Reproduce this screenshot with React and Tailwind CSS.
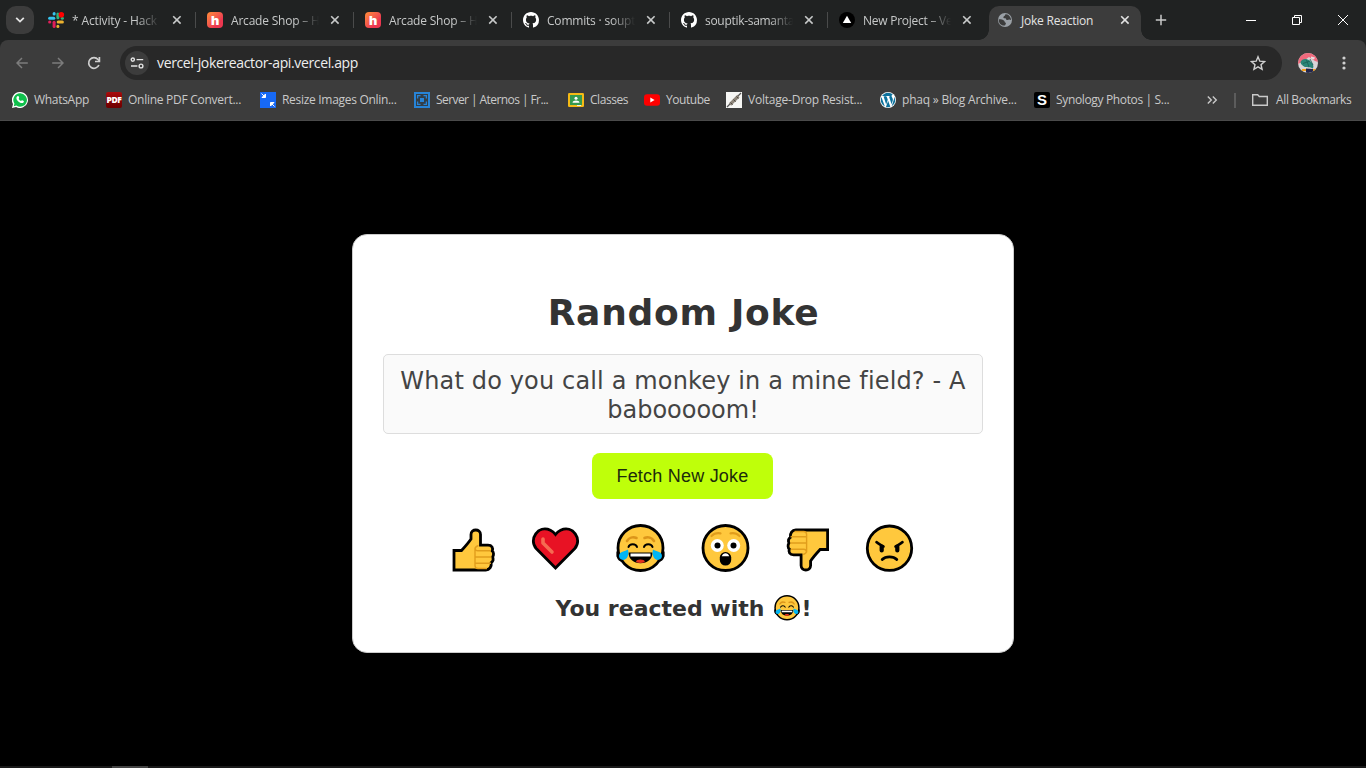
import React from "react";

const SlackIcon = () => (
  <svg viewBox="0 0 16 16" className="h-4 w-4 shrink-0 overflow-visible">
    <g strokeWidth="3" strokeLinecap="round" fill="none">
      <path d="M1.6 6.2h4.2" stroke="#36c5f0" />
      <path d="M6.1 1.6v.3" stroke="#36c5f0" />
      <path d="M9.9 2v3.8" stroke="#2eb67d" />
      <path d="M14.3 6.2h.1" stroke="#2eb67d" />
      <path d="M10.2 9.9h4.2" stroke="#ecb22e" />
      <path d="M9.9 14.2v.2" stroke="#ecb22e" />
      <path d="M6.1 10.2v4.2" stroke="#e01e5a" />
      <path d="M1.6 9.9h.2" stroke="#e01e5a" />
    </g>
    <circle cx="13.3" cy="2.7" r="2.8" fill="#f00" />
  </svg>
);

const ArcadeIcon = () => (
  <span className="flex h-4 w-4 shrink-0 items-center justify-center rounded-[4px] bg-linear-to-br from-[#ff8c37] to-[#ec3750] to-70% font-['Open_Sans',sans-serif] text-[13px] leading-none font-extrabold text-white">
    h
  </span>
);

const GithubIcon = () => (
  <svg viewBox="0 0 16 16" className="h-4 w-4 shrink-0" fill="#fff">
    <path d="M8 0C3.58 0 0 3.58 0 8c0 3.54 2.29 6.53 5.47 7.59.4.07.55-.17.55-.38 0-.19-.01-.82-.01-1.49-2.01.37-2.53-.49-2.69-.94-.09-.23-.48-.94-.82-1.13-.28-.15-.68-.52-.01-.53.63-.01 1.08.58 1.23.82.72 1.21 1.87.87 2.33.66.07-.52.28-.87.51-1.07-1.78-.2-3.64-.89-3.64-3.95 0-.87.31-1.59.82-2.15-.08-.2-.36-1.02.08-2.12 0 0 .67-.21 2.2.82.64-.18 1.32-.27 2-.27s1.36.09 2 .27c1.53-1.04 2.2-.82 2.2-.82.44 1.1.16 1.92.08 2.12.51.56.82 1.27.82 2.15 0 3.07-1.87 3.75-3.65 3.95.29.25.54.73.54 1.48 0 1.07-.01 1.93-.01 2.2 0 .21.15.46.55.38A8.01 8.01 0 0 0 16 8c0-4.42-3.58-8-8-8z" />
  </svg>
);

const VercelIcon = () => (
  <svg viewBox="0 0 16 16" className="h-4 w-4 shrink-0">
    <circle cx="8" cy="8" r="8" fill="#000" />
    <path d="M8 3.7 12.2 11H3.8z" fill="#fff" />
  </svg>
);

const GlobeIcon = () => (
  <svg viewBox="0 0 16 16" className="h-4 w-4 shrink-0">
    <circle cx="8" cy="8" r="7" fill="#9aa0a6" />
    <path d="M1.8 7.3c2.6.1 4 .4 5.3 1.4 1 .8.2 1.6 1.2 1.9 1.2.4.4 1.7-.3 2.9-3.6.6-6.4-1.8-6.2-6.2zM8.4 2.2c2.6-.2 4.8 1.9 5.4 4.2.5 2.2-.6 1.6-1.4 1.2-.8-.4-1.3.9-2.6.3-1.3-.5-.3-1.6-1.6-1.6-1.7 0-2.4-1-1.5-1.9.8-.8 1.3-.6 1.7-2.2z" fill="#3c3c3c" />
  </svg>
);

const TABS = [
  { icon: <SlackIcon />, pad: "pl-[10px]", gap: "gap-2", text: "* Activity - Hack", track: "tracking-[-0.14px]" },
  { icon: <ArcadeIcon />, pad: "pl-[11px]", gap: "gap-2", text: "Arcade Shop – H", track: "tracking-[-0.2px]" },
  { icon: <ArcadeIcon />, pad: "pl-[11px]", gap: "gap-2", text: "Arcade Shop – H", track: "tracking-[-0.2px]" },
  { icon: <GithubIcon />, pad: "pl-[11px]", gap: "gap-2", text: "Commits · soupt", track: "tracking-[-0.2px]" },
  { icon: <GithubIcon />, pad: "pl-[11px]", gap: "gap-2", text: "souptik-samanta", track: "tracking-[-0.3px]" },
  { icon: <VercelIcon />, pad: "pl-[11px]", gap: "gap-2", text: "New Project – Ve", track: "tracking-[-0.25px]" },
];

const CloseX = () => (
  <svg viewBox="0 0 10 10" className="h-[10px] w-[10px] shrink-0" stroke="currentColor" strokeWidth="1.6">
    <path d="M1.2 1.2l7.4 7.4M8.6 1.2L1.2 8.6" />
  </svg>
);

function TabStrip() {
  return (
    <div className="flex h-10 bg-[#202222] text-[12px] text-[#c7c9c9]">
      <div className="flex w-[38px] shrink-0 items-center pl-[6px]">
        <div className="flex h-7 w-7 items-center justify-center rounded-[10px] bg-[#3c3c3c]">
          <svg viewBox="0 0 10 8" className="h-2 w-[10px]" fill="none" stroke="#e3e3e3" strokeWidth="1.8">
            <path d="M1.2 1.8 5 5.6l3.8-3.8" />
          </svg>
        </div>
      </div>
      {TABS.map((t, i) => (
        <div key={i} className="flex w-[158px] shrink-0 items-center justify-between">
          <div className={`flex items-center ${t.pad} ${t.gap}`}>
            {t.icon}
            <span className={`w-[90px] pt-px whitespace-nowrap leading-4 mask-r-from-72% mask-r-to-98% ${t.track}`}>{t.text}</span>
          </div>
          <div className="flex items-center gap-[13px]">
            <CloseX />
            <span className={i === 5 ? "h-4 w-[1px]" : "h-4 w-[1px] bg-[#4a4b4b]"} />
          </div>
        </div>
      ))}
      <div className="flex w-[165px] shrink-0 items-end">
        <span className="-ml-[7px] h-[10px] w-[10px] shrink-0 bg-[radial-gradient(circle_at_0_0,transparent_9.5px,#3c3c3c_10px)]" />
        <div className="flex h-[34px] w-[152px] shrink-0 items-center rounded-t-[10px] bg-[#3c3c3c] pb-[6px] pl-2 text-[#e3e3e3]">
          <GlobeIcon />
          <span className="ml-2 w-[99px] pt-px whitespace-nowrap leading-4 tracking-[-0.22px]">Joke Reaction</span>
          <CloseX />
        </div>
        <span className="h-[10px] w-[10px] shrink-0 bg-[radial-gradient(circle_at_100%_0,transparent_9.5px,#3c3c3c_10px)]" />
      </div>
      <div className="flex flex-1 items-center">
        <svg viewBox="0 0 12 12" className="ml-[4px] h-3 w-3 shrink-0" stroke="#c7c9c9" strokeWidth="1.5">
          <path d="M6 .8v10.4M.8 6h10.4" />
        </svg>
        <svg viewBox="0 0 10 10" className="ml-[79px] h-[10px] w-[10px] shrink-0" stroke="#fff">
          <path d="M0 5.5h10" />
        </svg>
        <svg viewBox="0 0 10 10" className="ml-[36px] h-[10px] w-[10px] shrink-0 overflow-visible" stroke="#fff" fill="none">
          <path d="M.5 2.5h7v7h-7zM2.5 2.5v-2h7v7h-2" />
        </svg>
        <svg viewBox="0 0 10 10" className="ml-[36px] h-[10px] w-[10px] shrink-0" stroke="#fff">
          <path d="M0 0l10 10M10 0L0 10" />
        </svg>
      </div>
    </div>
  );
}

function Toolbar() {
  return (
    <div className="bg-[#202222]">
      <div className="flex h-10 items-end rounded-t-[8px] bg-[#3c3c3c]">
        <div className="flex h-[34px] w-[120px] shrink-0 items-center pl-4">
          <svg viewBox="0 0 12 12" className="h-3 w-3" fill="none" stroke="#7c7c7c" strokeWidth="1.5">
            <path d="M11.8 6H1.2M6 1 1 6l5 5" />
          </svg>
          <svg viewBox="0 0 12 12" className="ml-6 h-3 w-3" fill="none" stroke="#7c7c7c" strokeWidth="1.5">
            <path d="M.2 6h10.6M6 1l5 5-5 5" />
          </svg>
          <svg viewBox="0 0 14 14" className="ml-[23px] h-[14px] w-[14px]" fill="none" stroke="#d0d0d0" strokeWidth="1.7">
            <path d="M11.9 9A5.3 5.3 0 1 1 11 3.5L12.6 5" />
            <path d="M12.4 1v4.5H8" />
          </svg>
        </div>
        <div className="flex h-[34px] w-[1162px] shrink-0 items-center rounded-full bg-[#282828] pl-[5px]">
          <div className="flex h-6 w-6 items-center justify-center rounded-full bg-[#3c3c3c]">
            <svg viewBox="0 0 12 12" className="h-3 w-3 overflow-visible" fill="none" stroke="#e3e3e3" strokeWidth="1.4">
              <circle cx="1.8" cy="2.6" r="1.6" />
              <path d="M5.6 2.6h6.6M0 9h6.4" />
              <circle cx="10" cy="9" r="1.9" />
            </svg>
          </div>
          <span className="ml-2 text-[14px] leading-5 tracking-[-0.36px] whitespace-nowrap text-[#eee]">vercel-jokereactor-api.vercel.app</span>
          <svg viewBox="0 0 16 16" className="mr-4 ml-auto h-4 w-4" fill="none" stroke="#d0d0d0" strokeWidth="1.4">
            <path d="M8 1.8l1.8 4.4 4.8.4-3.6 3.1 1.1 4.6L8 11.9l-4.1 2.4L5 9.7 1.4 6.6l4.8-.4z" />
          </svg>
        </div>
        <div className="flex h-[34px] items-center pl-[16px]">
          <svg viewBox="0 0 20 20" className="h-5 w-5">
            <defs>
              <clipPath id="avatar"><circle cx="10" cy="10" r="10" /></clipPath>
            </defs>
            <g clipPath="url(#avatar)">
              <path d="M0 0h20v20H0z" fill="#d9d5d7" />
              <path d="M0 0h20v9l-3-1-6-4-7 5-4 2z" fill="#f0697c" />
              <path d="M13 3.5l4 1-1 2-3-1z" fill="#e9dde0" />
              <path d="M2.5 9c1.5-3.5 6-4 9.5-1 3 2 4 5 3 7.5-3-2-7-.5-9-2S2.5 11 2.5 9z" fill="#2b8577" />
              <path d="M5 10.5l7-2.5M8.5 7l2.5 7M12 6l3 6" stroke="#1b5f57" fill="none" strokeWidth=".8" />
              <path d="M8 15.5l7 .5 1 4-8 1z" fill="#24264a" />
              <path d="M4 16h4v2H4zM15 16h3v2h-3z" fill="#f5a11a" />
            </g>
          </svg>
          <svg viewBox="0 0 4 14" className="ml-6 h-[14px] w-1" fill="#d0d0d0">
            <circle cx="2" cy="2" r="1.6" />
            <circle cx="2" cy="7" r="1.6" />
            <circle cx="2" cy="12" r="1.6" />
          </svg>
        </div>
      </div>
    </div>
  );
}

const ic = "h-4 w-4 shrink-0";
const BOOKMARKS = [
  {
    w: "w-[94px]", text: "WhatsApp", track: "tracking-[-0.3px]",
    icon: (
      <svg viewBox="0 0 16 16" className={ic}>
        <path d="M8 0a8 8 0 0 0-7 12L0 16l4.1-1A8 8 0 1 0 8 0z" fill="#fff" />
        <path d="M8 1.3a6.7 6.7 0 0 0-5.6 10.3l-.6 2.6 2.6-.7A6.7 6.7 0 1 0 8 1.3z" fill="#10bf4c" />
        <path d="M5.4 4.2c.4-.4 1-.3 1.2.1l.6 1.4c.1.4-.7.9-.5 1.2.5.9 1.3 1.6 2.3 2 .4.1.8-.9 1.2-.7l1.5.7c.5.3 0 1.6-.8 2-2.7 1-6.6-2.4-6.5-4.9 0-.8.6-1.4 1-1.8z" fill="#fff" />
      </svg>
    ),
  },
  {
    w: "w-[154px]", text: "Online PDF Convert...", track: "tracking-[-0.27px]",
    icon: (
      <span className="flex h-4 w-4 shrink-0 items-center justify-center rounded-[2px] bg-linear-to-b from-[#a80c0c] to-[#6d0000] text-[8.5px] font-extrabold tracking-[-0.4px] text-white">PDF</span>
    ),
  },
  {
    w: "w-[154px]", text: "Resize Images Onlin...", track: "tracking-[-0.3px]",
    icon: (
      <svg viewBox="0 0 16 16" className={ic}>
        <path d="M0 0h16v16H0z" fill="#1769f5" />
        <path d="M1.5 1.5l2.5 2.5M5.5 2v3.5H2zM14.5 14.5l-2.5-2.5M10.5 14v-3.5H14z" fill="#fff" stroke="#fff" strokeWidth="1" />
      </svg>
    ),
  },
  {
    w: "w-[154px]", text: "Server | Aternos | Fr...", track: "tracking-[-0.57px]",
    icon: (
      <svg viewBox="0 0 16 16" className={ic}>
        <path d="M0 0h16v16H0z" fill="#2783d6" />
        <path d="M2 2h12v12H2z" fill="#323d46" />
        <path d="M6.5 3.6H3.6v2.9M9.5 3.6h2.9v2.9M6.5 12.4H3.6V9.5M9.5 12.4h2.9V9.5" fill="none" stroke="#2783d6" strokeWidth="1.3" />
        <path d="M6 6h4v4H6z" fill="#2783d6" />
      </svg>
    ),
  },
  {
    w: "w-[76px]", text: "Classes", track: "tracking-[-0.45px]",
    icon: (
      <svg viewBox="0 0 16 16" className={ic}>
        <rect y="1" width="16" height="14" rx="1.2" fill="#f5ba15" />
        <path d="M2 3h12v10H2z" fill="#35994f" />
        <circle cx="8" cy="6.2" r="1.5" fill="#fff" />
        <path d="M4.5 10.8c0-3 7-3 7 0z" fill="#fff" />
        <path d="M9 13h4v1H9z" fill="#eee" />
      </svg>
    ),
  },
  {
    w: "w-[82px]", text: "Youtube", track: "tracking-[-0.45px]",
    icon: (
      <svg viewBox="0 0 16 16" className={ic}>
        <rect y="2.3" width="16" height="11.4" rx="3" fill="#f00" />
        <path d="M6.3 5.6v4.8L10.6 8z" fill="#fff" />
      </svg>
    ),
  },
  {
    w: "w-[154px]", text: "Voltage-Drop Resist...", track: "tracking-[-0.22px]",
    icon: (
      <svg viewBox="0 0 16 16" className={ic}>
        <path d="M0 0h16v16H0z" fill="#f6f6f4" />
        <path d="M1 15 15 1" stroke="#555" strokeWidth="1.2" />
        <path d="M4 12.5 12.5 4" stroke="#8e867b" strokeWidth="3.2" />
        <path d="M4.5 10.5l2.2 2.2M7.5 7.5l2.2 2.2M10.5 4.5l2 2" stroke="#4e4a44" strokeWidth="1" />
      </svg>
    ),
  },
  {
    w: "w-[154px]", text: "phaq » Blog Archive...", track: "tracking-[-0.21px]",
    icon: (
      <svg viewBox="0 0 24 24" className={ic}>
        <circle cx="12" cy="12" r="12" fill="#fff" />
        <path fill="#0c719c" d="M21.469 6.825c.84 1.537 1.318 3.3 1.318 5.175 0 3.979-2.156 7.456-5.363 9.325l3.295-9.527c.615-1.54.82-2.771.82-3.864 0-.405-.026-.78-.07-1.11m-7.981.105c.647-.03 1.232-.105 1.232-.105.582-.075.514-.93-.067-.899 0 0-1.755.135-2.88.135-1.064 0-2.85-.15-2.85-.15-.585-.03-.661.855-.075.885 0 0 .54.061 1.125.09l1.68 4.605-2.37 7.08L5.354 6.9c.649-.03 1.234-.1 1.234-.1.585-.075.516-.93-.065-.896 0 0-1.746.138-2.874.138-.2 0-.438-.008-.69-.015C4.911 3.15 8.235 1.215 12 1.215c2.809 0 5.365 1.072 7.286 2.833-.046-.003-.091-.009-.141-.009-1.06 0-1.812.923-1.812 1.914 0 .89.513 1.643 1.06 2.531.411.72.89 1.643.89 2.977 0 .915-.354 1.994-.821 3.479l-1.075 3.585-3.9-11.61.001.015zM12 22.784c-1.059 0-2.081-.153-3.048-.437l3.237-9.406 3.315 9.087c.024.053.05.101.078.149-1.12.393-2.325.607-3.582.607M1.211 12c0-1.564.336-3.05.935-4.39L7.29 21.709C3.694 19.96 1.212 16.271 1.211 12" />
      </svg>
    ),
  },
  {
    w: "w-[154px]", text: "Synology Photos | S...", track: "tracking-[-0.35px]",
    icon: (
      <span className="flex h-4 w-4 shrink-0 items-center justify-center rounded-[2px] bg-black font-['Liberation_Sans',sans-serif] text-[15px] leading-none font-bold text-white">
        <span className="-mt-px">S</span>
      </span>
    ),
  },
];

function BookmarksBar() {
  return (
    <div className="flex h-[41px] items-center border-b border-[#4a4a4a] bg-[#3c3c3c] pl-3 text-[12px] text-[#c9c9c9]">
      {BOOKMARKS.map((b) => (
        <div key={b.text} className={`flex shrink-0 items-center gap-[6px] ${b.w}`}>
          {b.icon}
          <span className={`whitespace-nowrap leading-4 ${b.track}`}>{b.text}</span>
        </div>
      ))}
      <svg viewBox="0 0 10 8" className="ml-[19px] h-2 w-[10px] shrink-0 overflow-visible" fill="none" stroke="#c9c9c9" strokeWidth="1.4">
        <path d="M.8.5 4.3 4 .8 7.5M5.8.5 9.3 4 5.8 7.5" />
      </svg>
      <span className="ml-[17px] h-[15px] w-[2px] shrink-0 bg-[#5c5c5c]" />
      <svg viewBox="0 0 16 12" className="ml-4 h-3 w-4 shrink-0" fill="none" stroke="#c9c9c9" strokeWidth="1.4">
        <path d="M.7 10.6V.8h5l1.6 1.7h8v8.8H.7z" />
      </svg>
      <span className="ml-2 whitespace-nowrap leading-4 tracking-[-0.35px]">All Bookmarks</span>
    </div>
  );
}

const YELLOW = "#ffc83d";

const Thumb = () => (
  <>
    <path d="M454 550.5h7.5c3.5-3.8 6.8-7.4 9.5-11.5v-4.5c0-6 9.5-6 9.5 0v10.7h7.5c4 0 5.4 3 4.2 5.6 1.7 1.4 1.7 4.6.4 6.1 1 2.2.2 4.6-1.4 5.7.6 4.4-1.8 7.4-5.4 7.4h-31.8z" fill={YELLOW} stroke="#000" strokeWidth="2.8" />
    <path d="M491 550.8h-13c-2 0-3-1.5-3-3.4M491.5 557h-16M491 563.3h-15.5M475 548v17.5c0 2 1 3 3 3h9M478.5 545.5c-2 .6-3.5 1.5-3.5 3.8" fill="none" stroke="#e19d1c" strokeWidth="1.4" />
  </>
);

const Laugh = () => (
  <>
    <circle cx="640.5" cy="548" r="22.5" fill={YELLOW} stroke="#000" strokeWidth="2.8" />
    <path d="M627 541c2-3.5 6-4.5 9.5-3M654 541c-2-3.5-6-4.5-9.5-3" fill="none" stroke="#dc951a" strokeWidth="2.6" strokeLinecap="round" />
    <path d="M628.5 547c1-3.8 7.5-3.8 8.5 0M644 547c1-3.8 7.5-3.8 8.5 0" fill="none" stroke="#000" strokeWidth="2" strokeLinecap="round" />
    <path d="M628.5 552.5h24c0 6.5-5 10.7-12 10.7s-12-4.2-12-10.7z" fill="#000" />
    <path d="M630.5 553.5h20v3h-20z" fill="#fff" />
    <path d="M636 562c0-3.2 8.8-3.2 8.8 0-2.6 1.3-6.2 1.3-8.8 0z" fill="#e3311d" />
    <path d="M617.7 551.5v4.5c1 3 3.5 4.5 5.5 4.3M663.3 551.5v4.5c-1 3-3.5 4.5-5.5 4.3" stroke="#000" strokeWidth="2.6" fill="none" />
    <path d="M628 549.5c1.6 6-1.5 10.6-5 10.4-4-.3-5-4.4-2.8-6.8 2-2 5.3-2 7.8-3.6zM653 549.5c-1.6 6 1.5 10.6 5 10.4 4-.3 5-4.4 2.8-6.8-2-2-5.3-2-7.8-3.6z" fill="#00b5f4" />
  </>
);

const REACTIONS = [
  { name: "like", box: "450 524 50 50", art: <Thumb /> },
  {
    name: "love", box: "533 524 50 50",
    art: (
      <>
        <path d="M555.5 568 536.2 548.5c-8-9 2-24 14.2-18.2q3 1.4 5.1 4.2 2.1-2.8 5.1-4.2c12.2-5.8 22.2 9.2 14.2 18.2z" fill="#e81224" stroke="#000" strokeWidth="2.8" />
        <path d="M543 539v4l9 9" fill="none" stroke="#f56b52" strokeWidth="3.6" strokeLinecap="round" strokeLinejoin="round" />
      </>
    ),
  },
  { name: "laugh", box: "616 524 50 50", art: <Laugh /> },
  {
    name: "wow", box: "699 524 50 50",
    art: (
      <>
        <circle cx="725.5" cy="548" r="22.5" fill={YELLOW} stroke="#000" strokeWidth="2.8" />
        <path d="M711.5 536c2-2 5.5-3.2 9-2.6M739.5 536c-2-2-5.5-3.2-9-2.6" fill="none" stroke="#e19d1c" strokeWidth="2.2" strokeLinecap="round" />
        <circle cx="717.3" cy="545.5" r="6.5" fill="#fff" />
        <circle cx="733.7" cy="545.5" r="6.5" fill="#fff" />
        <circle cx="717.5" cy="545.5" r="3" />
        <circle cx="733.5" cy="545.5" r="3" />
        <rect x="719.8" y="552" width="11.4" height="13.6" rx="5.6" />
        <path d="M721.8 556.2c1-4 6.4-4 7.4 0z" fill="#fff" />
      </>
    ),
  },
  { name: "dislike", box: "782 524 50 50", art: <g transform="rotate(180 640.8 550)"><Thumb /></g> },
  {
    name: "angry", box: "865 524 50 50",
    art: (
      <>
        <circle cx="889.5" cy="548.2" r="22.2" fill={YELLOW} stroke="#000" strokeWidth="2.8" />
        <path d="M876.5 542.2c3 2 5 3.5 7 4.3M902.5 542.2c-3 2-5 3.5-7 4.3" fill="none" stroke="#000" strokeWidth="2.6" strokeLinecap="round" />
        <path d="M881.7 546.5v4M897.3 546.5v4" stroke="#000" strokeWidth="4.2" strokeLinecap="round" />
        <path d="M882.2 559.6c3.5-3.6 11.1-3.6 14.6 0" fill="none" stroke="#000" strokeWidth="2.8" strokeLinecap="round" />
      </>
    ),
  },
];

function JokeCard() {
  return (
    <div className="mt-[113px] h-[419px] w-[662px] rounded-[15px] border border-[#ccc] bg-white px-[30px] text-center font-['DejaVu_Sans',Verdana,sans-serif] text-[#333]">
      <h1 className="mt-[56px] h-[44px] pl-[1px] text-[36px] leading-[44px] font-bold tracking-[0.72px] whitespace-nowrap">Random Joke</h1>
      <p className="mt-[19px] h-[80px] rounded-[5px] border border-[#ddd] bg-[#fafafa] pt-[12px] text-[24px] leading-[29px] text-[#444]">
        <span className="block tracking-[0.15px] whitespace-nowrap">What do you call a monkey in a mine field? - A</span>
        <span className="block">babooooom!</span>
      </p>
      <button className="mt-[19px] mr-[2px] h-[46px] w-[181px] rounded-[8px] bg-[#bfff0a] pl-[1px] font-['Liberation_Sans',Arial,sans-serif] text-[18px] tracking-[0.22px] text-[#1c2b0b]">Fetch New Joke</button>
      <div className="mt-[25px] mr-[2px] flex justify-center gap-[33px]">
        {REACTIONS.map((r) => (
          <svg key={r.name} viewBox={r.box} className="h-[50px] w-[50px] overflow-visible">{r.art}</svg>
        ))}
      </div>
      <p className="mt-[20px] flex h-[28px] items-center justify-center pl-[1px] text-[22px] font-bold whitespace-nowrap">
        You reacted with
        <svg viewBox="616 524 49 49" className="mr-[1px] ml-[10px] h-[26px] w-[26px]"><Laugh /></svg>!
      </p>
    </div>
  );
}

export default function App() {
  return (
    <div className="flex h-[768px] w-[1366px] flex-col overflow-hidden bg-black font-['Open_Sans',sans-serif]">
      <TabStrip />
      <Toolbar />
      <BookmarksBar />
      <main className="flex flex-1 flex-col items-center">
        <JokeCard />
      </main>
      <footer className="flex h-[2px] bg-[#1a1a1a] pl-[112px]">
        <span className="h-[2px] w-9 bg-[#444]" />
      </footer>
    </div>
  );
}
